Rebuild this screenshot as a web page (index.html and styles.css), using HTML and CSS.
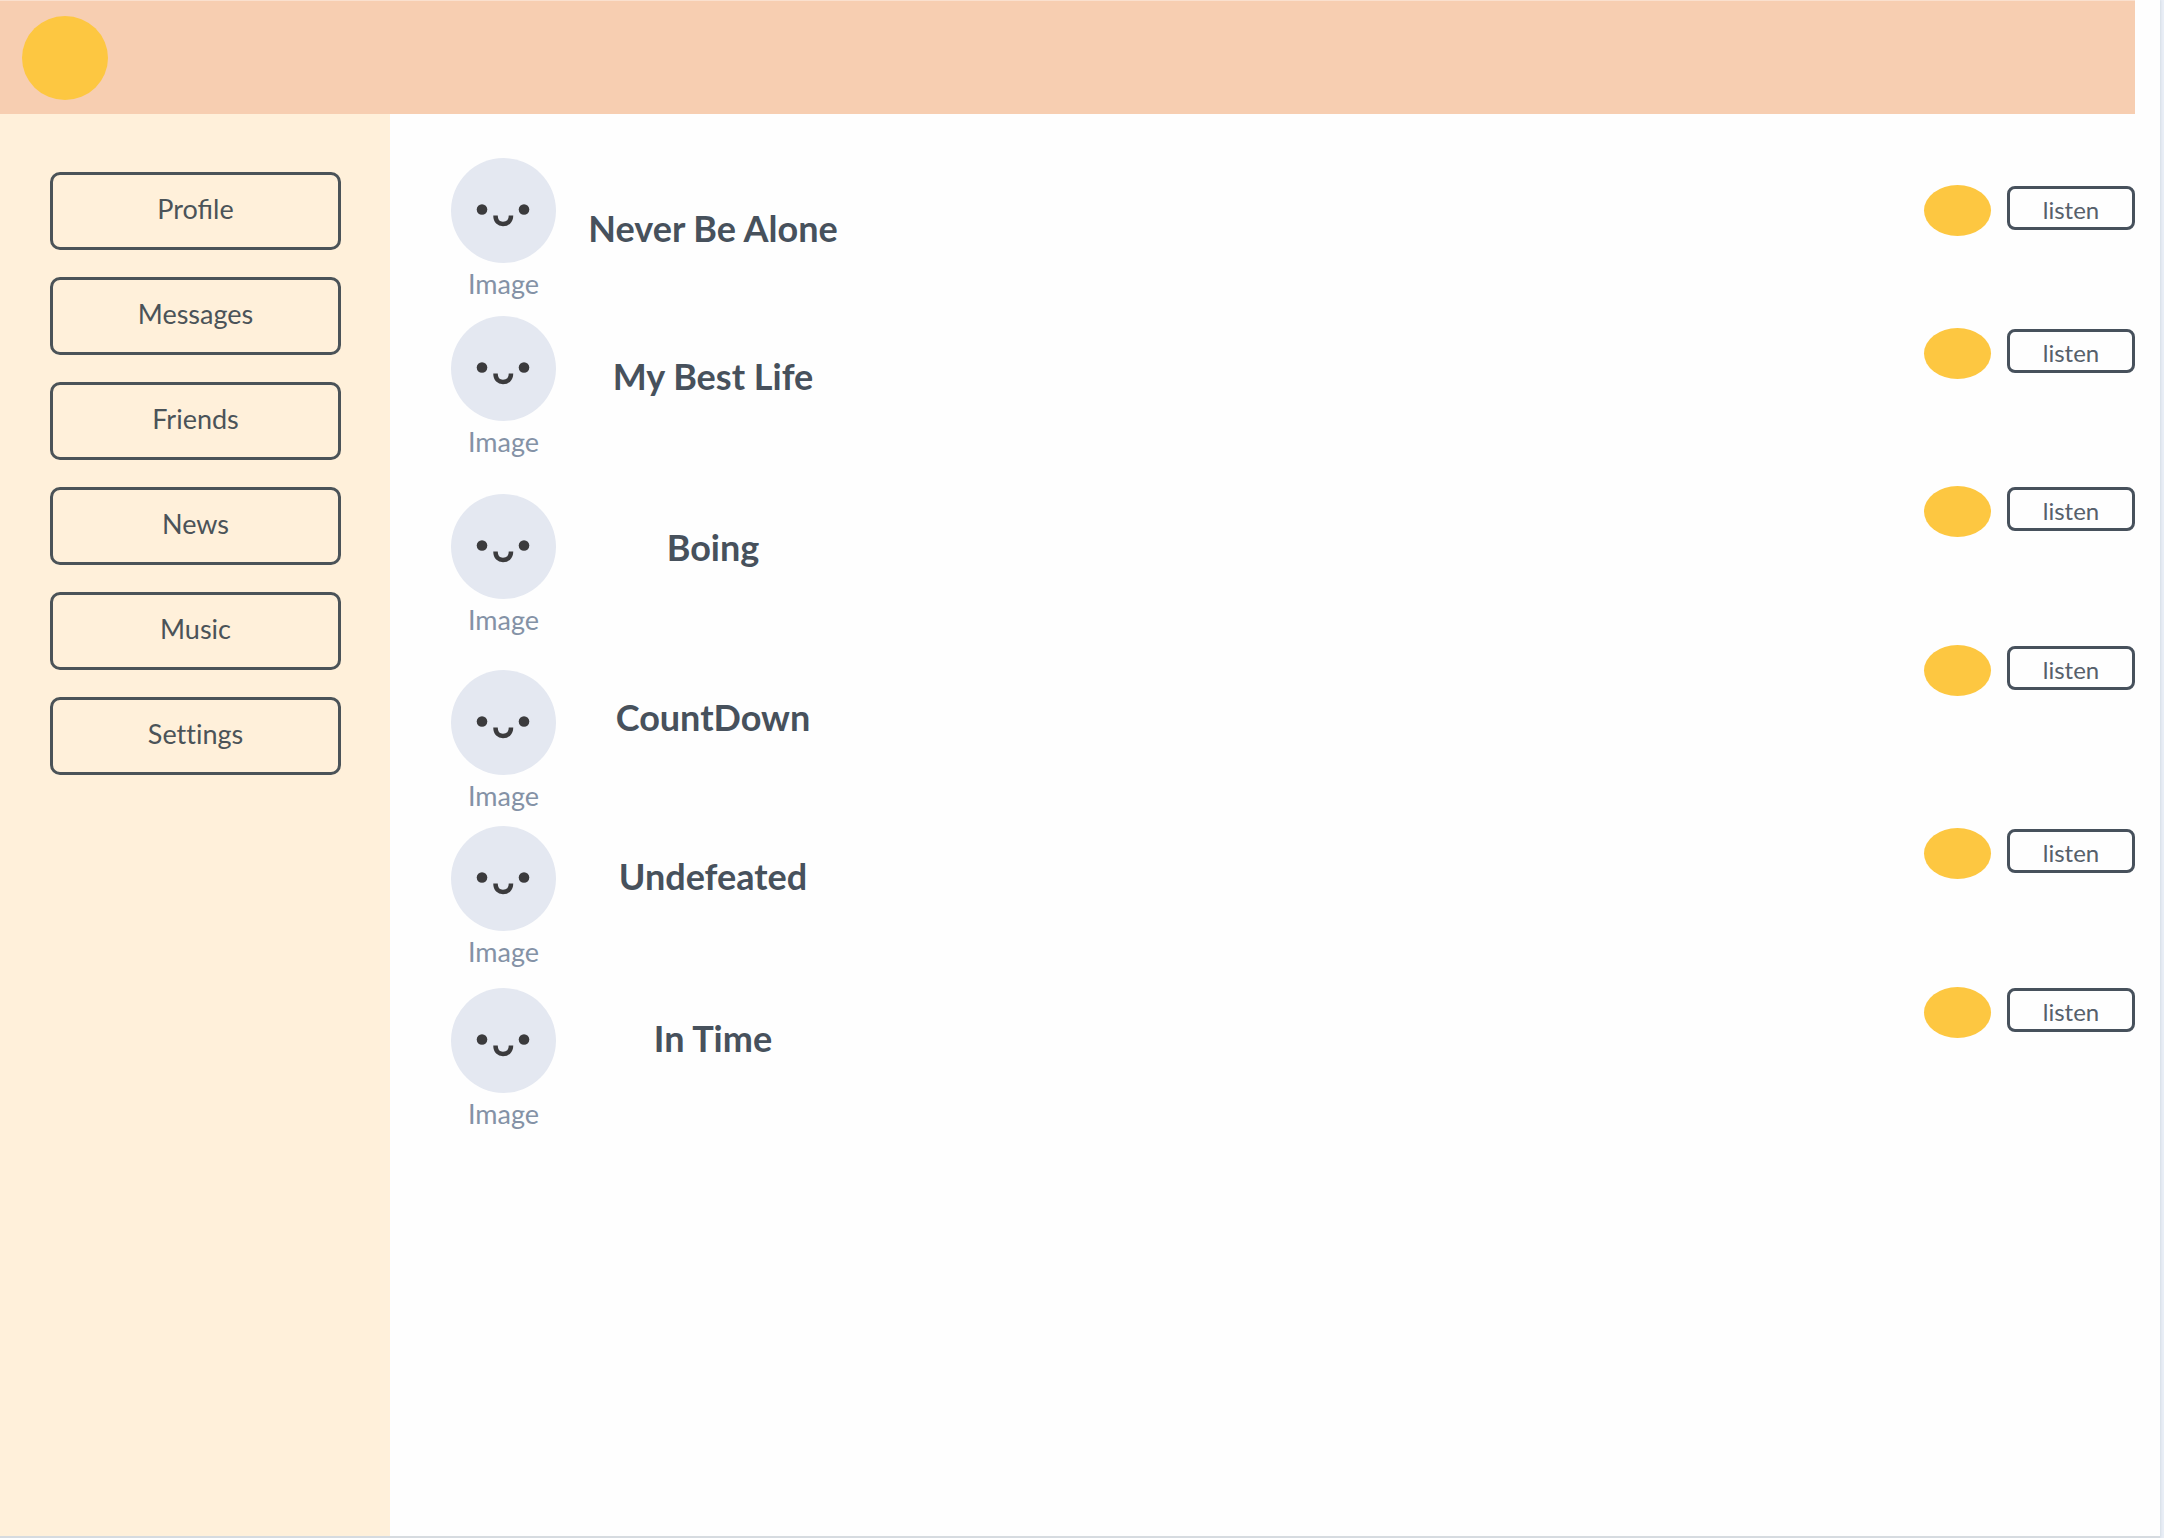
FILE: index.html
```html
<!DOCTYPE html>
<html lang="en">
<head>
  <meta charset="utf-8">
  <meta name="viewport" content="width=device-width, initial-scale=1">
  <title>Music</title>
  <link rel="stylesheet" href="styles.css">
</head>
<body>
  <svg class="defs" aria-hidden="true">
    <symbol id="face" viewBox="0 0 105 105">
      <circle cx="31" cy="51.500" r="5.300"/>
      <circle cx="73" cy="51.500" r="5.300"/>
      <path d="M44.500 57.500C44.500 63.500 48 66 52 66S60 63.500 60 57.500" fill="none" stroke="currentColor" stroke-width="4.500"/>
    </symbol>
  </svg>
  <div class="page">
    <header class="topbar"><div class="logo"></div></header>
    <div class="body">
      <nav class="sidebar">
        <button class="nav-button" type="button">Profile</button>
        <button class="nav-button" type="button">Messages</button>
        <button class="nav-button" type="button">Friends</button>
        <button class="nav-button" type="button">News</button>
        <button class="nav-button" type="button">Music</button>
        <button class="nav-button no-ligatures" type="button">Settings</button>
      </nav>
      <main class="tracks">
        <div class="covers">
          <figure class="cover"><svg class="avatar"><use href="#face"/></svg><figcaption class="caption">Image</figcaption></figure>
          <figure class="cover"><svg class="avatar"><use href="#face"/></svg><figcaption class="caption">Image</figcaption></figure>
          <figure class="cover"><svg class="avatar"><use href="#face"/></svg><figcaption class="caption">Image</figcaption></figure>
          <figure class="cover"><svg class="avatar"><use href="#face"/></svg><figcaption class="caption">Image</figcaption></figure>
          <figure class="cover"><svg class="avatar"><use href="#face"/></svg><figcaption class="caption">Image</figcaption></figure>
          <figure class="cover"><svg class="avatar"><use href="#face"/></svg><figcaption class="caption">Image</figcaption></figure>
        </div>
        <div class="titles">
          <h2 class="title">Never Be Alone</h2>
          <h2 class="title">My Best Life</h2>
          <h2 class="title">Boing</h2>
          <h2 class="title">CountDown</h2>
          <h2 class="title">Undefeated</h2>
          <h2 class="title">In Time</h2>
        </div>
        <div class="actions">
          <div class="action"><span class="dot"></span><button class="listen" type="button">listen</button></div>
          <div class="action"><span class="dot"></span><button class="listen" type="button">listen</button></div>
          <div class="action"><span class="dot"></span><button class="listen" type="button">listen</button></div>
          <div class="action"><span class="dot"></span><button class="listen" type="button">listen</button></div>
          <div class="action"><span class="dot"></span><button class="listen" type="button">listen</button></div>
          <div class="action"><span class="dot"></span><button class="listen" type="button">listen</button></div>
        </div>
      </main>
    </div>
  </div>
</body>
</html>
```
FILE: styles.css
```css
* {
  box-sizing: border-box;
}

body {
  margin: 0;
  padding-right: 4px;
  background: #e9eef6;
  color: #47515c;
  font-family: Lato, sans-serif;
}

.defs {
  display: none;
}

.page {
  display: flex;
  flex-direction: column;
  min-height: 100vh;
  background: #fefefe;
  border-bottom: 2px solid #d6dbe0;
  box-shadow: 1px 0 2px #d5dde6;
}

.topbar {
  display: flex;
  align-items: center;
  height: 114px;
  margin-right: 25px;
  padding-left: 22px;
  background: #f7ceb1;
  border-top: 1px solid #fae0ce;
}

.logo {
  width: 86px;
  height: 84px;
  border-radius: 50%;
  background: #fdc741;
}

.body {
  display: flex;
  flex: 1;
}

.sidebar {
  display: flex;
  flex-direction: column;
  gap: 27px;
  width: 390px;
  padding: 58px 49px 58px 50px;
  background: #fff0da;
}

.nav-button {
  height: 78px;
  padding: 0 0 4px;
  border: 3px solid #4b5358;
  border-radius: 10px;
  background: none;
  color: #4b5358;
  font: 27px/32px Lato, sans-serif;
}

.no-ligatures {
  font-variant-ligatures: none;
}

.tracks {
  display: flex;
  flex: 1;
  align-items: flex-start;
  gap: 32px;
  padding: 0 25px 0 61px;
}

.covers,
.titles,
.actions {
  display: grid;
}

.covers {
  grid-template-rows: 158px 178px 176px 156px 162px auto;
  padding-top: 44px;
}

.cover {
  width: 105px;
  margin: 0;
  text-align: center;
}

.avatar {
  display: block;
  width: 105px;
  height: 105px;
  border-radius: 50%;
  background: #e4e8f1;
  color: #3b3b3d;
  fill: #3b3b3d;
}

.caption {
  padding-top: 4px;
  color: #8492a6;
  font-size: 27px;
  line-height: 34px;
}

.titles {
  grid-template-rows: 148px 171px 170px 159px 162px auto;
  width: 250px;
  padding-top: 92px;
  text-align: center;
}

.title {
  margin: 0;
  font-size: 36px;
  font-weight: 700;
  line-height: 44px;
  white-space: nowrap;
}

.actions {
  grid-template-rows: 143px 158px 159px 183px 159px auto;
  margin-left: auto;
  padding-top: 71px;
}

.action {
  display: flex;
  align-items: flex-start;
  gap: 16px;
}

.dot {
  width: 67px;
  height: 51px;
  border-radius: 50%;
  background: #fdc741;
}

.listen {
  width: 128px;
  height: 44px;
  margin-top: 1px;
  padding: 3px 0 0;
  border: 3px solid #47515c;
  border-radius: 8px;
  background: none;
  color: #56606b;
  font: 24px/30px Lato, sans-serif;
}
```
